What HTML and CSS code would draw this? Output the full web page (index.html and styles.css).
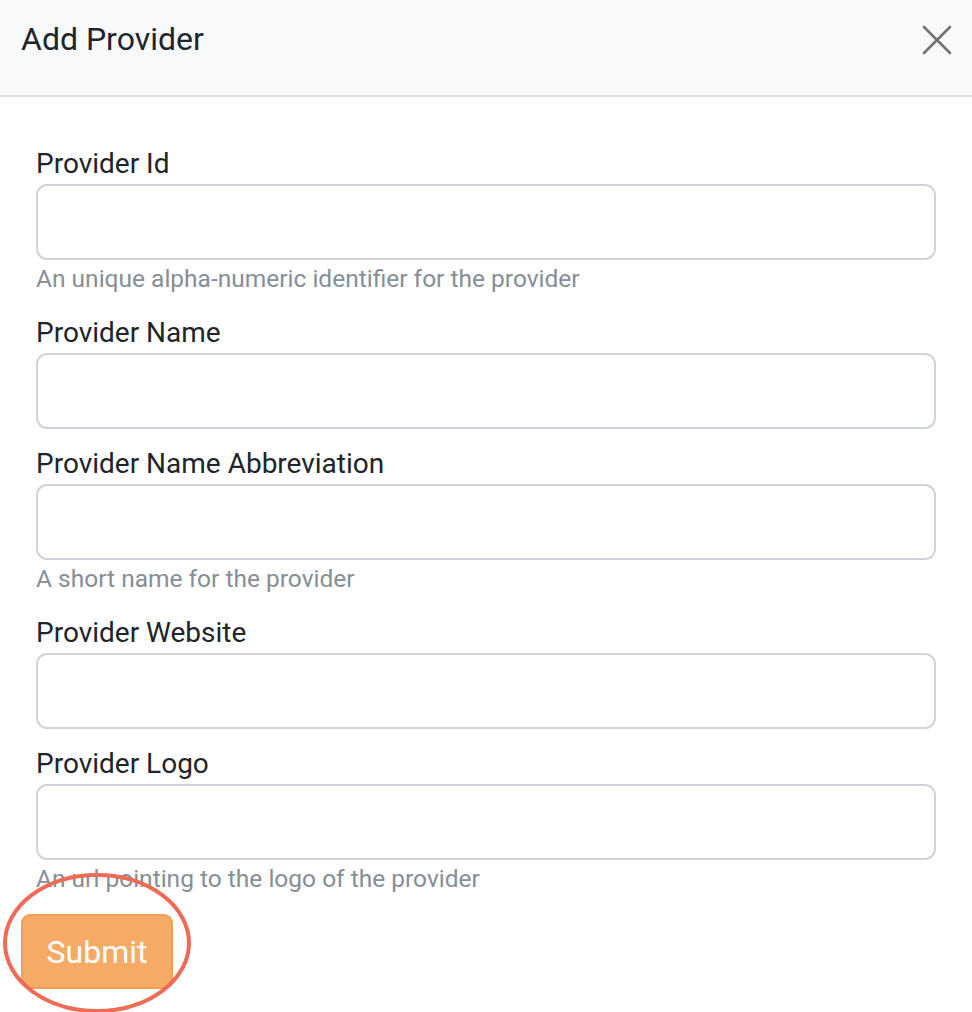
FILE: index.html
```html
<!DOCTYPE html>
<html lang="en">
<head>
<meta charset="utf-8">
<title>Add Provider</title>
<link rel="stylesheet" href="styles.css">
</head>
<body>
<div class="modal">
  <div class="modal-header">
    <h5 class="modal-title">Add Provider</h5>
    <button class="close" type="button" aria-label="Close">
      <svg width="30" height="30" viewBox="0 0 30 30"><path d="M2 2 L28 28 M28 2 L2 28" stroke="#737373" stroke-width="2.6" stroke-linecap="round" fill="none"/></svg>
    </button>
  </div>
  <form class="modal-body">
    <div class="fields">
      <div class="form-group">
        <label class="label">Provider Id</label>
        <input class="input" type="text">
        <small class="help">An unique alpha-numeric identifier for the provider</small>
      </div>
      <div class="form-group">
        <label class="label">Provider Name</label>
        <input class="input" type="text">
      </div>
      <div class="form-group">
        <label class="label">Provider Name Abbreviation</label>
        <input class="input" type="text">
        <small class="help">A short name for the provider</small>
      </div>
      <div class="form-group">
        <label class="label">Provider Website</label>
        <input class="input" type="text">
      </div>
      <div class="form-group">
        <label class="label">Provider Logo</label>
        <input class="input" type="text">
        <small class="help">An url pointing to the logo of the provider</small>
      </div>
    </div>
    <div class="actions">
      <button class="btn-submit" type="button">Submit</button>
    </div>
  </form>
  <svg class="annotation" width="196" height="150" viewBox="0 0 196 150"><ellipse cx="97" cy="71" rx="92" ry="68" fill="none" stroke="#ee6b56" stroke-width="4"/></svg>
</div>
</body>
</html>
```

FILE: styles.css
```css
* { box-sizing: border-box; }
html, body { margin: 0; padding: 0; background: #fff; }
body {
  font-family: Roboto, "Liberation Sans", Arial, sans-serif;
  color: #212529;
  width: 972px;
  height: 1012px;
  overflow: hidden;
}
.modal { position: relative; width: 972px; height: 1012px; }
.modal-header {
  height: 97px;
  background: #f8f9fa;
  border-bottom: 2px solid #dee2e6;
  display: flex;
  align-items: flex-start;
  justify-content: space-between;
  padding: 18px 20px 0 21px;
}
.modal-title {
  margin: 0;
  font-size: 32px;
  font-weight: 400;
  line-height: 42px;
  color: #212529;
}
.close {
  border: 0;
  background: transparent;
  padding: 0;
  margin-top: 7px;
  width: 30px;
  height: 30px;
  display: block;
}
.close svg { display: block; }
.modal-body {
  display: flex;
  flex-direction: column;
  padding: 49px 21px 0 21px;
  margin: 0;
}
.fields {
  display: flex;
  flex-direction: column;
  gap: 17px;
  padding: 0 15px;
}
.form-group { display: flex; flex-direction: column; }
.label {
  font-size: 28px;
  line-height: 36px;
  margin-bottom: 2px;
}
.input {
  height: 76px;
  width: 100%;
  border: 2px solid #ced4da;
  border-radius: 11px;
  background: #fff;
  font: inherit;
  margin: 0;
}
.help {
  font-size: 24.5px;
  line-height: 38px;
  color: #868e96;
}
.actions { margin-top: 16px; display: flex; }
.btn-submit {
  width: 152px;
  height: 75px;
  background: #f5aa65;
  border: 2px solid #f1a052;
  border-radius: 9px;
  color: #fff;
  font-family: Roboto, "Liberation Sans", Arial, sans-serif;
  font-size: 32px;
  padding: 0;
}
.annotation {
  position: absolute;
  left: 0;
  top: 872px;
  overflow: visible;
}
```
